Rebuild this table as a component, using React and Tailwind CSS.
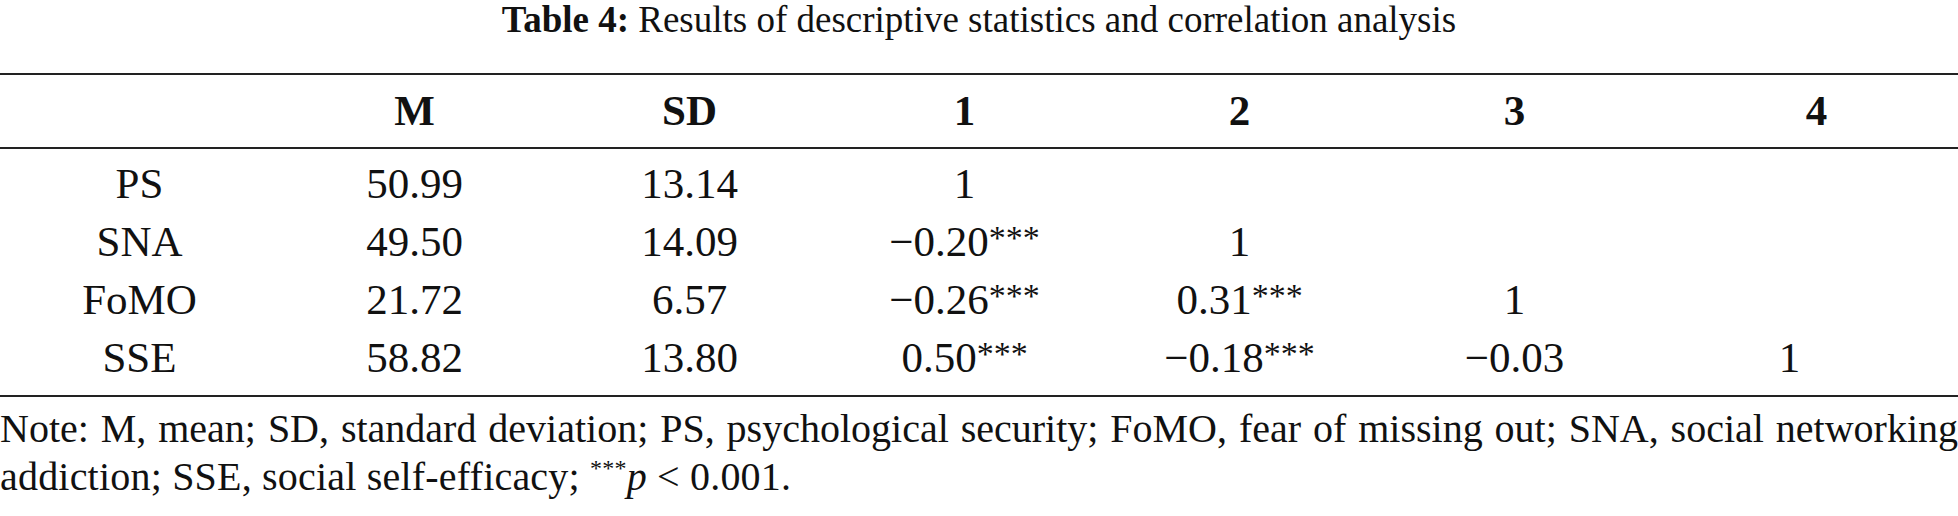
import React from 'react';

const rows = [
  { name: 'PS', m: '50.99', sd: '13.14', c: [['1'], [], [], []] },
  { name: 'SNA', m: '49.50', sd: '14.09', c: [['−0.20', true], ['1'], [], []] },
  { name: 'FoMO', m: '21.72', sd: '6.57', c: [['−0.26', true], ['0.31', true], ['1'], []] },
  { name: 'SSE', m: '58.82', sd: '13.80', c: [['0.50', true], ['−0.18', true], ['−0.03'], ['1']] },
];

const Stars = () => <sup className="text-[34px] top-[-0.2em]">***</sup>;

const Cell = ({ value, star }) => (
  <div className="text-center">
    {value}
    {star && <Stars />}
  </div>
);

const App = () => {
  return (
    <div className="w-[1958px] h-[516px] bg-white text-[#111] font-['Liberation_Serif',serif] overflow-hidden">
      <div className="text-center text-[37px] leading-[40px]">
        <span className="font-bold">Table 4:</span> Results of descriptive statistics and correlation analysis
      </div>

      <div className="mt-[33px] border-t-2 border-b-2 border-[#222]">
        <div className="grid grid-cols-[repeat(7,275px)] pl-[2px] text-[43px] leading-[72px] font-bold">
          <div></div>
          <div className="text-center">M</div>
          <div className="text-center">SD</div>
          <div className="text-center">1</div>
          <div className="text-center">2</div>
          <div className="text-center">3</div>
          <div className="text-center pl-[54px]">4</div>
        </div>
      </div>

      <div className="border-b-2 border-[#222] pt-[6px] pb-[8px]">
        {rows.map((r) => (
          <div key={r.name} className="grid grid-cols-[repeat(7,275px)] pl-[2px] text-[43px] leading-[58px]">
            <div className="text-center">{r.name}</div>
            <div className="text-center">{r.m}</div>
            <div className="text-center">{r.sd}</div>
            {r.c.map((v, i) => (
              <Cell key={i} value={v[0]} star={v[1]} />
            ))}
          </div>
        ))}
      </div>

      <div className="mt-[8px] text-[40px] leading-[48px]">
        <div className="text-justify [text-align-last:justify]">
          Note: M, mean; SD, standard deviation; PS, psychological security; FoMO, fear of missing out; SNA, social networking
        </div>
        <div className="tracking-[0.2px]">
          addiction; SSE, social self-efficacy; <sup className="text-[24px] top-[-0.6em]">***</sup>
          <span className="italic">p</span> &lt; 0.001.
        </div>
      </div>
    </div>
  );
};

export default App;
